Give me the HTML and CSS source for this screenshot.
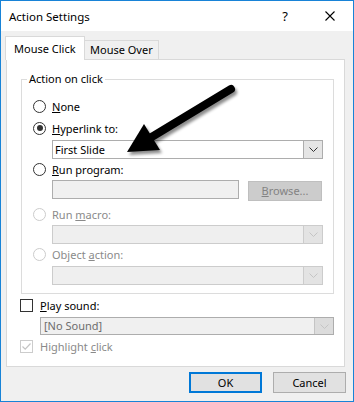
FILE: index.html
```html
<!DOCTYPE html>
<html lang="en">
<head>
    <meta charset="UTF-8">
    <title>Action Settings</title>
    <link rel="stylesheet" href="styles.css">
</head>
<body>
<div class="window">
    <!-- Title bar -->
    <div class="titlebar">
        <span class="title">Action Settings</span>
        <span class="help">?</span>
        <span class="close">
            <svg width="10" height="10" viewBox="0 0 10 10"><path d="M0.5 0.5 L9.5 9.5 M9.5 0.5 L0.5 9.5" stroke="#000" stroke-width="1.1" fill="none"/></svg>
        </span>
    </div>

    <div class="body">
        <div class="tabs">
            <div class="tab active">Mouse Click</div>
            <div class="tab">Mouse Over</div>
        </div>

        <div class="panel">
            <div class="group">
                <div class="group-title">Action on click</div>

                <div class="opt first"><span class="radio"></span><span><u>N</u>one</span></div>
                <div class="opt"><span class="radio checked"></span><span><u>H</u>yperlink to:</span></div>
                <div class="combo">
                    <span class="combo-text">First Slide</span>
                    <span class="combo-btn"><svg width="9" height="5" viewBox="0 0 9 5"><path d="M0.5 0.5 L4.5 4.5 L8.5 0.5" stroke="#333" fill="none"/></svg></span>
                </div>

                <div class="opt tight"><span class="radio"></span><span><u>R</u>un program:</span></div>
                <div class="program-row">
                    <span class="textbox"></span>
                    <span class="browse"><u>B</u>rowse...</span>
                </div>

                <div class="opt disabled macro"><span class="radio"></span><span>Run <u>m</u>acro:</span></div>
                <div class="combo disabled one">
                    <span class="combo-text"></span>
                    <span class="combo-btn"><svg width="9" height="5" viewBox="0 0 9 5"><path d="M0.5 0.5 L4.5 4.5 L8.5 0.5" stroke="#c4c4c4" fill="none"/></svg></span>
                </div>

                <div class="opt disabled tight"><span class="radio"></span><span>Object <u>a</u>ction:</span></div>
                <div class="combo disabled">
                    <span class="combo-text"></span>
                    <span class="combo-btn"><svg width="9" height="5" viewBox="0 0 9 5"><path d="M0.5 0.5 L4.5 4.5 L8.5 0.5" stroke="#c4c4c4" fill="none"/></svg></span>
                </div>
            </div>

            <div class="check-row"><span class="checkbox"></span><span><u>P</u>lay sound:</span></div>
            <div class="combo sound">
                <span class="combo-text">[No Sound]</span>
                <span class="combo-btn"><svg width="9" height="5" viewBox="0 0 9 5"><path d="M0.5 0.5 L4.5 4.5 L8.5 0.5" stroke="#c4c4c4" fill="none"/></svg></span>
            </div>
            <div class="check-row disabled">
                <span class="checkbox">
                    <svg width="11" height="11" viewBox="0 0 11 11"><path d="M1.5 5.5 L4.2 8.2 L9.5 2.5" stroke="#c4c4c4" stroke-width="1.2" fill="none"/></svg>
                </span>
                <span>Highlight <u>c</u>lick</span>
            </div>
        </div>

        <div class="buttons">
            <span class="btn default">OK</span>
            <span class="btn">Cancel</span>
        </div>
    </div>

    <!-- Callout arrow drawn on top of the dialog -->
    <svg class="arrow" viewBox="120 80 120 80" width="120" height="80">
        <defs>
            <filter id="shadow" x="-20%" y="-20%" width="140%" height="150%">
                <feDropShadow dx="2" dy="3" stdDeviation="1.5" flood-color="#000" flood-opacity="0.45"/>
            </filter>
        </defs>
        <g filter="url(#shadow)">
            <line x1="150" y1="138" x2="231" y2="89" stroke="#000" stroke-width="8" stroke-linecap="round"/>
            <polygon points="127,152 144,124 160,150" fill="#000"/>
        </g>
    </svg>
</div>
</body>
</html>
```

FILE: styles.css
```css
body {
    margin: 0;
    font-family: "Noto Sans", "Open Sans", sans-serif;
    font-size: 11px;
    color: #000;
}

u {
    text-underline-offset: 1px;
}

.window {
    position: relative;
    width: 354px;
    height: 402px;
    box-sizing: border-box;
    border: 1px solid #1883d7;
    background: #f0f0f0;
    display: flex;
    flex-direction: column;
}

/* Title bar */
.titlebar {
    height: 30px;
    background: #fff;
    display: flex;
    align-items: center;
    padding-left: 8px;
}

.title {
    font-size: 11.5px;
    flex: 1;
}

.help {
    width: 30px;
    margin-right: 7px;
    text-align: center;
    font-size: 13px;
}

.close {
    width: 46px;
    display: flex;
    justify-content: center;
}

/* Tabs */
.tabs {
    display: flex;
    align-items: flex-end;
    padding: 5px 0 0 4px;
}

.tab {
    height: 19px;
    box-sizing: border-box;
    border: 1px solid #d9d9d9;
    border-bottom: none;
    padding-left: 5px;
    line-height: 18px;
    width: 75px;
    margin-left: -1px;
    background: #f0f0f0;
}

.tab.active {
    position: relative;
    z-index: 1;
    height: 24px;
    width: 80px;
    margin-left: 0;
    margin-bottom: -1px;
    padding-left: 8px;
    line-height: 23px;
    background: #fff;
}

.panel {
    margin-left: 5px;
    width: 339px;
    box-sizing: border-box;
    border: 1px solid #d9d9d9;
    background: #fff;
    padding-bottom: 10px;
}

/* Group box */
.group {
    margin: 19px 10px 0 14px;
    border: 1px solid #dcdcdc;
    padding-bottom: 8px;
}

.group-title {
    width: fit-content;
    margin: -9px 0 0 5px;
    padding: 0 2px;
    line-height: 16px;
    background: #fff;
}

.opt {
    display: flex;
    align-items: center;
    height: 20px;
    padding-left: 11px;
    margin-top: 2px;
}

.opt.first {
    margin-top: 9px;
}

.opt.tight {
    margin-top: 0;
}

.opt.macro {
    margin-top: 3px;
}

.radio {
    width: 13px;
    height: 13px;
    box-sizing: border-box;
    border: 1px solid #333;
    border-radius: 50%;
    margin-right: 6px;
    display: flex;
    align-items: center;
    justify-content: center;
}

.radio.checked::after {
    content: "";
    width: 6px;
    height: 6px;
    border-radius: 50%;
    background: #333;
}

.disabled {
    color: #8a8a8a;
}

.opt.disabled .radio {
    border-color: #cccccc;
}

/* Combo boxes */
.combo {
    display: flex;
    height: 19px;
    box-sizing: border-box;
    margin: 2px 10px 0 30px;
    border: 1px solid #adadad;
    background: #fff;
}

.combo.one {
    margin-top: 1px;
}

.combo-text {
    flex: 1;
    padding-left: 2px;
    line-height: 17px;
}

.combo-btn {
    width: 19px;
    box-sizing: border-box;
    border-left: 1px solid #adadad;
    background: #e5e5e5;
    display: flex;
    align-items: center;
    justify-content: center;
}

.combo.disabled {
    border-color: #cccccc;
    background: #efefef;
}

.combo.disabled .combo-btn {
    border-left-color: #cccccc;
    background: #e3e3e3;
}

.combo.sound {
    height: 18px;
    margin: 2px 10px 0 33px;
    background: #f0f0f0;
    color: #6d6d6d;
}

.combo.sound .combo-text {
    padding-left: 3px;
    line-height: 16px;
}

.combo.sound .combo-btn {
    background: #dcdcdc;
    border-left-color: #c4c4c4;
}

/* Run program row */
.program-row {
    display: flex;
    align-items: flex-start;
    height: 21px;
    margin: 1px 0 0 30px;
}

.textbox {
    width: 187px;
    height: 19px;
    box-sizing: border-box;
    border: 1px solid #adadad;
    background: #f0f0f0;
}

.browse {
    width: 74px;
    height: 20px;
    box-sizing: border-box;
    margin: 1px 0 0 9px;
    border: 1px solid #bfbfbf;
    background: #cccccc;
    color: #838383;
    text-align: center;
    line-height: 18px;
}

/* Check boxes */
.check-row {
    display: flex;
    align-items: center;
    height: 20px;
    margin-top: 1px;
    padding-left: 13px;
}

.checkbox {
    width: 13px;
    height: 13px;
    box-sizing: border-box;
    border: 1px solid #333;
    margin-right: 7px;
    display: flex;
    align-items: center;
    justify-content: center;
}

.check-row.disabled .checkbox {
    border-color: #cccccc;
}

/* Dialog buttons */
.buttons {
    display: flex;
    justify-content: flex-end;
    gap: 11px;
    margin-top: 5px;
    padding-right: 7px;
}

.btn {
    width: 73px;
    height: 21px;
    box-sizing: border-box;
    border: 1px solid #adadad;
    background: #e1e1e1;
    text-align: center;
    line-height: 19px;
}

.btn.default {
    border: 2px solid #0078d7;
    line-height: 17px;
}

.arrow {
    position: absolute;
    left: 119px;
    top: 79px;
    pointer-events: none;
}
```
